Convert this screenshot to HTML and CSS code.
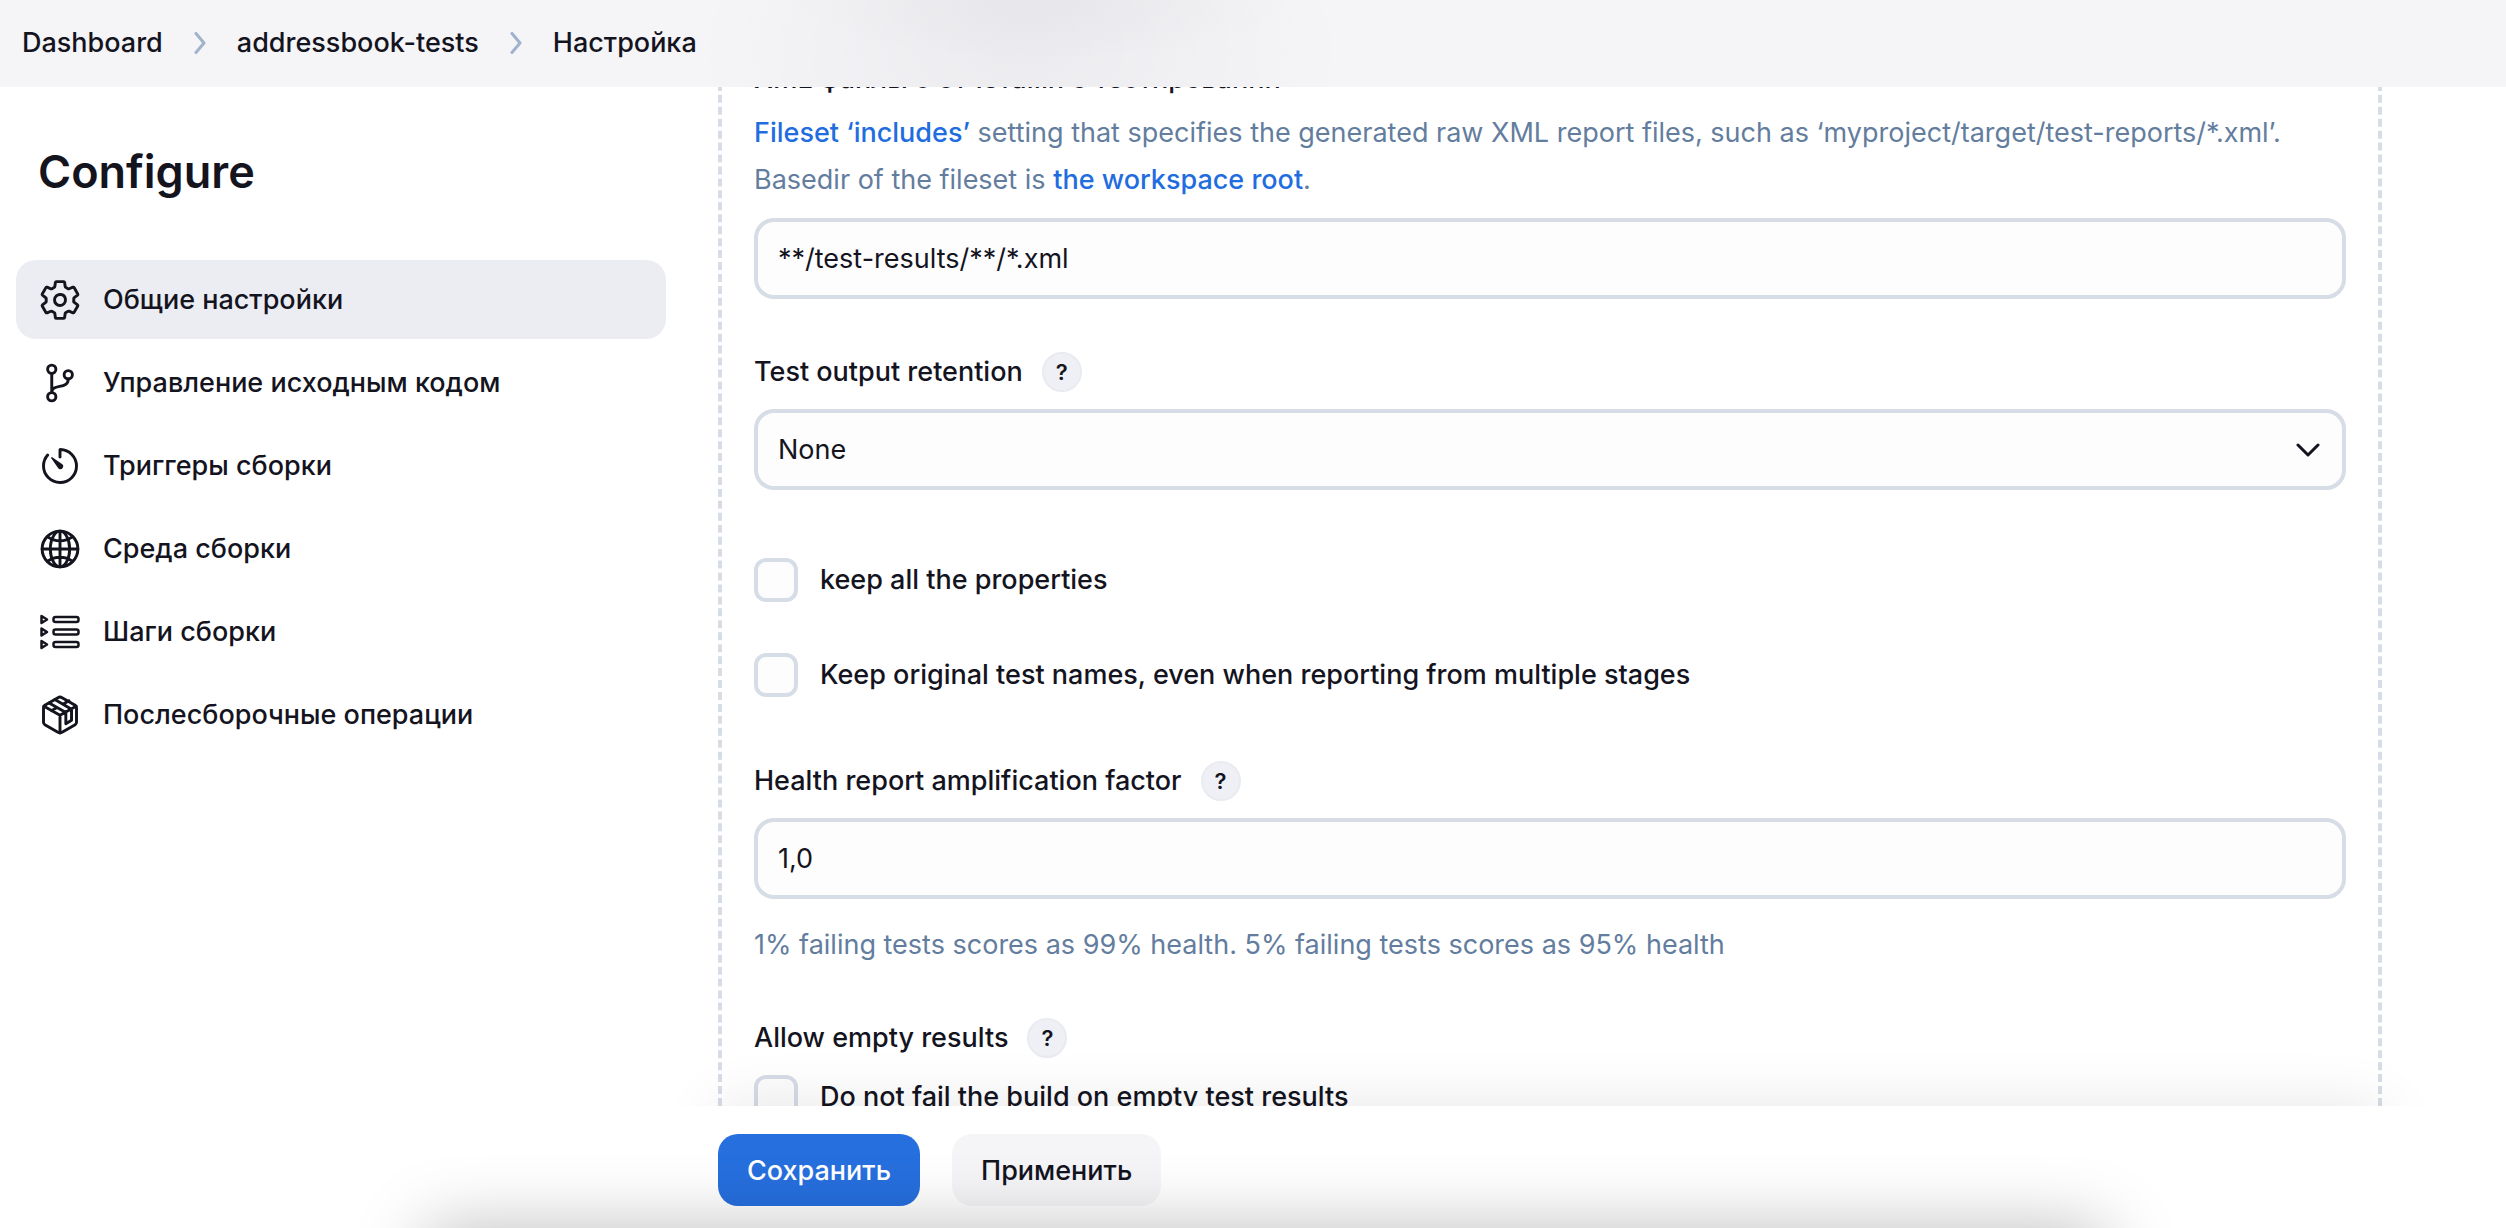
FILE: index.html
```html
<!DOCTYPE html>
<html lang="ru">
<head>
<meta charset="utf-8">
<meta name="viewport" content="width=device-width, initial-scale=1">
<title>Настройка – addressbook-tests</title>
<link rel="stylesheet" href="styles.css">
</head>
<body>
<header class="header">
  <nav class="crumbs" aria-label="Breadcrumb">
    <a href="#">Dashboard</a>
    <svg class="crumb-sep" viewBox="0 0 12 22" aria-hidden="true"><path d="M2 1.5 10 11 2 20.5"/></svg>
    <a href="#">addressbook-tests</a>
    <svg class="crumb-sep" viewBox="0 0 12 22" aria-hidden="true"><path d="M2 1.5 10 11 2 20.5"/></svg>
    <a href="#">Настройка</a>
  </nav>
</header>
<div class="page">
  <aside class="sidebar">
    <h1 class="title">Configure</h1>
    <nav class="menu" aria-label="Configure">
      <a class="menu-item active" href="#general">
        <svg class="icon" viewBox="0 0 512 512" aria-hidden="true"><path d="M262.29 192.31a64 64 0 1057.4 57.4 64.13 64.13 0 00-57.4-57.4zM416.39 256a154.34 154.34 0 01-1.53 20.79l45.21 35.46a10.81 10.81 0 012.45 13.75l-42.77 74a10.81 10.81 0 01-13.14 4.59l-44.9-18.08a16.11 16.11 0 00-15.17 1.75A164.48 164.48 0 01325 400.8a15.94 15.94 0 00-8.82 12.14l-6.73 47.89a11.08 11.08 0 01-10.68 9.17h-85.54a11.11 11.11 0 01-10.69-8.87l-6.72-47.82a16.07 16.07 0 00-9-12.22 155.3 155.3 0 01-21.46-12.57 16 16 0 00-15.11-1.71l-44.89 18.07a10.81 10.81 0 01-13.14-4.58l-42.77-74a10.8 10.8 0 012.45-13.75l38.21-30a16.05 16.05 0 006-14.08c-.36-4.17-.58-8.33-.58-12.5s.21-8.27.58-12.35a16 16 0 00-6.07-13.94l-38.19-30A10.81 10.81 0 0149.48 186l42.77-74a10.81 10.81 0 0113.14-4.59l44.9 18.08a16.11 16.11 0 0015.17-1.75A164.48 164.48 0 01187 111.2a15.94 15.94 0 008.82-12.14l6.73-47.89A11.08 11.08 0 01213.23 42h85.54a11.11 11.11 0 0110.69 8.87l6.72 47.82a16.07 16.07 0 009 12.22 155.3 155.3 0 0121.46 12.57 16 16 0 0015.11 1.71l44.89-18.07a10.81 10.81 0 0113.14 4.58l42.77 74a10.8 10.8 0 01-2.45 13.75l-38.21 30a16.05 16.05 0 00-6.05 14.08c.33 4.14.55 8.3.55 12.47z"/></svg>
        Общие настройки</a>
      <a class="menu-item" href="#scm">
        <svg class="icon" viewBox="0 0 512 512" aria-hidden="true"><circle cx="160" cy="96" r="48"/><circle cx="160" cy="416" r="48"/><circle cx="352" cy="160" r="48"/><path d="M160 368V144M352 208c0 128-192 48-192 160"/></svg>
        Управление исходным кодом</a>
      <a class="menu-item" href="#triggers">
        <svg class="icon" viewBox="0 0 512 512" aria-hidden="true"><path d="M112.91 128A191.85 191.85 0 0064 254c-1.18 106.35 85.65 193.8 192 194 106.2.2 192-85.83 192-192 0-104.54-83.55-189.61-187.5-192a4.36 4.36 0 00-4.5 4.37V152"/><path class="solid" d="M233.38 278.63l-79-113a8.13 8.13 0 0111.32-11.32l113 79a32.5 32.5 0 01-37.25 53.26 33.21 33.21 0 01-8.07-7.94z"/></svg>
        Триггеры сборки</a>
      <a class="menu-item" href="#environment">
        <svg class="icon" viewBox="0 0 512 512" aria-hidden="true"><path d="M256 48C141.13 48 48 141.13 48 256s93.13 208 208 208 208-93.13 208-208S370.87 48 256 48z"/><path d="M256 48c-58.07 0-112.67 93.13-112.67 208S197.93 464 256 464s112.67-93.13 112.67-208S314.07 48 256 48z"/><path d="M117.33 117.33c38.24 27.15 86.38 43.34 138.67 43.34s100.43-16.19 138.67-43.34M394.67 394.67c-38.24-27.15-86.38-43.34-138.67-43.34s-100.43 16.19-138.67 43.34M256 48v416M464 256H48"/></svg>
        Среда сборки</a>
      <a class="menu-item" href="#build-steps">
        <svg class="icon" viewBox="0 0 44 44" aria-hidden="true"><g class="steps"><path d="M3.500 6 9 9.500 3.500 13zM3.500 18.500 9 22 3.500 25.500zM3.500 31 9 34.500 3.500 38z"/><rect x="15.500" y="7" width="25" height="5" rx="2"/><rect x="15.500" y="19.500" width="25" height="5" rx="2"/><rect x="15.500" y="32" width="25" height="5" rx="2"/></g></svg>
        Шаги сборки</a>
      <a class="menu-item" href="#post-build">
        <svg class="icon" viewBox="0 0 512 512" aria-hidden="true"><path d="M448 341.37V170.61A32 32 0 00432.11 143l-152-88.46a47.94 47.94 0 00-48.24 0L79.89 143A32 32 0 0064 170.61v170.76A32 32 0 0079.89 369l152 88.46a48 48 0 0048.24 0l152-88.46A32 32 0 00448 341.37z"/><path d="M69 154l187 104 187-104M256 464V258M196 76l194 112v130l-66 40V226L130 116M156 206l66-38M294 128l66-38"/></svg>
        Послесборочные операции</a>
    </nav>
  </aside>
  <main class="main">
    <form class="form" id="config">
      <label class="label" for="xml">XML файлы с отчетами о тестировании</label>
      <p class="description"><a href="#">Fileset ‘includes’</a> setting that specifies the generated raw XML report files, such as ‘myproject/target/test-reports/*.xml’.<br>Basedir of the fileset is <a href="#">the workspace root</a>.</p>
      <input class="field" id="xml" type="text" value="**/test-results/**/*.xml">

      <div class="label-row">
        <label class="label" for="retention">Test output retention</label>
        <button class="help" type="button" aria-label="Help: Test output retention">?</button>
      </div>
      <div class="select">
        <select class="field" id="retention"><option>None</option></select>
        <svg class="chevron" viewBox="0 0 24 14" aria-hidden="true"><path d="M2 2 12 12 22 2"/></svg>
      </div>

      <div class="checks">
        <label class="check"><input type="checkbox">keep all the properties</label>
        <label class="check"><input type="checkbox">Keep original test names, even when reporting from multiple stages</label>
      </div>

      <div class="label-row after-checks">
        <label class="label" for="factor">Health report amplification factor</label>
        <button class="help" type="button" aria-label="Help: Health report amplification factor">?</button>
      </div>
      <input class="field" id="factor" type="text" value="1,0">
      <p class="hint">1% failing tests scores as 99% health. 5% failing tests scores as 95% health</p>

      <div class="label-row">
        <span class="label">Allow empty results</span>
        <button class="help" type="button" aria-label="Help: Allow empty results">?</button>
      </div>
      <label class="check"><input type="checkbox">Do not fail the build on empty test results</label>
    </form>
    <div class="actions">
      <span class="actions-shadow"></span>
      <button class="button primary" type="submit" form="config">Сохранить</button>
      <button class="button" type="button">Применить</button>
    </div>
  </main>
</div>
</body>
</html>
```
FILE: styles.css
```css
:root {
  --text: #14141f;
  --muted: #637d9e;
  --link: #1f6ddf;
  --line: #d6dde6;
  --gap: 17px;
}

* { box-sizing: border-box; }

body {
  margin: 0;
  height: 100vh;
  display: flex;
  flex-direction: column;
  overflow: hidden;
  background: #fff;
  color: var(--text);
  font: 500 27px/40px Inter, "Noto Sans", sans-serif;
}

a { color: inherit; text-decoration: none; }
button, input, select { font: inherit; color: inherit; }

.header {
  position: relative;
  z-index: 2;
  padding: 23px 22px 24px;
  background:
    radial-gradient(ellipse 260px 60px at 1040px 0, rgba(0, 0, 20, .03), transparent),
    radial-gradient(ellipse 330px 180px at 1020px 50px, rgba(0, 0, 20, .04), transparent),
    #f5f5f8;
}

.crumbs { display: flex; align-items: center; gap: 31px; }

.crumb-sep {
  width: 12px;
  height: 22px;
  fill: none;
  stroke: #9fb3cc;
  stroke-width: 3;
  stroke-linecap: round;
  stroke-linejoin: round;
}

.page { flex: 1; min-height: 0; display: flex; }

.sidebar { flex: none; width: 718px; padding: 53px 52px 0 16px; }

.title { margin: 0 0 56px 22px; font-size: 45px; line-height: 64px; font-weight: 600; }

.menu { display: flex; flex-direction: column; gap: 4px; }

.menu-item {
  display: flex;
  align-items: center;
  gap: 21px;
  padding: 18px 22px 17px;
  border-radius: 20px;
}

.menu-item.active { background: #ecedf3; }

.icon {
  width: 44px;
  height: 44px;
  fill: none;
  stroke: currentColor;
  stroke-width: 34;
  stroke-linecap: round;
  stroke-linejoin: round;
}

.icon .solid { fill: currentColor; stroke: none; }
.icon .steps { stroke-width: 2.5; }

.main {
  flex: 1;
  min-width: 0;
  margin-right: 124px;
  display: flex;
  flex-direction: column;
}

/* The form is scrolled, so its first label runs under the header */
.form {
  flex: 1;
  min-height: 0;
  margin-top: -28px;
  padding: 0 32px;
  border: dashed var(--line);
  border-width: 0 4px;
}

.label { display: block; }

.description { margin: 10px 0 15px; line-height: 47px; font-weight: 400; color: var(--muted); }
.description a { color: var(--link); font-weight: 500; }

.field {
  display: block;
  width: 100%;
  height: 81px;
  padding: 0 20px;
  border: 4px solid var(--line);
  border-radius: 20px;
  background: #fdfdfd;
  font-weight: 400;
  appearance: none;
  outline: 0;
}

.label-row { display: flex; align-items: center; gap: 19px; margin: 53px 0 var(--gap); }
.after-checks { margin-top: 64px; }

.help {
  width: 40px;
  height: 40px;
  padding: 0;
  border: 2px solid #e9ebf0;
  border-radius: 50%;
  background: #eff0f5;
  font-size: 22px;
  line-height: 36px;
  font-weight: 600;
  text-align: center;
}

.select { position: relative; }

.chevron {
  position: absolute;
  top: 34px;
  right: 26px;
  width: 24px;
  height: 14px;
  fill: none;
  stroke: currentColor;
  stroke-width: 3;
  stroke-linecap: round;
  stroke-linejoin: round;
  pointer-events: none;
}

.checks { display: flex; flex-direction: column; gap: 51px; margin-top: 68px; }

.check { display: flex; align-items: center; gap: 22px; }

.check input {
  flex: none;
  width: 44px;
  height: 44px;
  margin: 0;
  border: 4px solid var(--line);
  border-radius: 12px;
  background: #fdfdfd;
  appearance: none;
}

.hint { margin: 26px 0 0; font-weight: 400; color: var(--muted); }

.actions {
  position: relative;
  flex: none;
  display: flex;
  gap: 32px;
  padding: 28px 0 22px;
  background: #fff;
}

/* Soft shade cast upwards on the form by the sticky bar */
.actions-shadow {
  position: absolute;
  bottom: 100%;
  left: -60px;
  right: -60px;
  height: 60px;
  overflow: hidden;
  pointer-events: none;
}

.actions-shadow::after {
  content: "";
  position: absolute;
  top: 100%;
  left: 60px;
  right: 60px;
  height: 100px;
  box-shadow: 0 0 60px rgba(0, 0, 0, .1);
}

/* Shade along the lower edge of the window */
.page::after {
  content: "";
  position: fixed;
  z-index: 3;
  top: 100%;
  left: 17%;
  right: 16%;
  height: 100px;
  box-shadow: 0 0 70px rgba(0, 0, 0, .26);
  pointer-events: none;
}

.button {
  height: 72px;
  padding: 1px 29px 0;
  border: 0;
  border-radius: 20px;
  background: #f5f5f8;
}

.button.primary { background: #266fde; color: #fff; }
```
